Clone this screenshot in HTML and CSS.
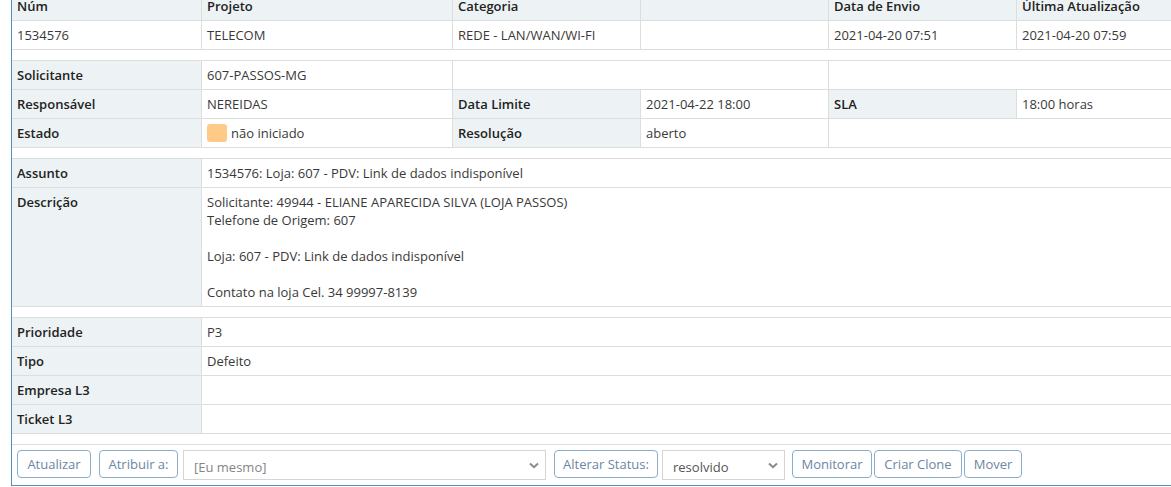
FILE: index.html
```html
<!DOCTYPE html>
<html lang="pt-BR">
<head>
<meta charset="utf-8">
<title>Ticket 1534576</title>
<link rel="stylesheet" href="styles.css">
</head>
<body>
<div class="widget">
  <table class="bug">
    <colgroup>
      <col class="c1"><col class="c2"><col class="c3"><col class="c4"><col class="c5"><col class="c6">
    </colgroup>
    <thead>
      <tr><th>Núm</th><th>Projeto</th><th>Categoria</th><th></th><th>Data de Envio</th><th>Última Atualização</th></tr>
    </thead>
    <tbody>
      <tr><td>1534576</td><td>TELECOM</td><td>REDE - LAN/WAN/WI-FI</td><td></td><td>2021-04-20 07:51</td><td>2021-04-20 07:59</td></tr>
      <tr class="spacer"><td colspan="6"></td></tr>
      <tr><th>Solicitante</th><td>607-PASSOS-MG</td><td colspan="2"></td><td colspan="2"></td></tr>
      <tr><th>Responsável</th><td>NEREIDAS</td><th>Data Limite</th><td>2021-04-22 18:00</td><th>SLA</th><td>18:00 horas</td></tr>
      <tr><th>Estado</th><td><span class="swatch"></span>não iniciado</td><th>Resolução</th><td>aberto</td><td colspan="2"></td></tr>
      <tr class="spacer"><td colspan="6"></td></tr>
      <tr><th>Assunto</th><td colspan="5">1534576: Loja: 607 - PDV: Link de dados indisponível</td></tr>
      <tr><th>Descrição</th><td colspan="5">Solicitante: 49944 - ELIANE APARECIDA SILVA (LOJA PASSOS)<br>Telefone de Origem: 607<br><br>Loja: 607 - PDV: Link de dados indisponível<br><br>Contato na loja Cel. 34 99997-8139</td></tr>
      <tr class="spacer"><td colspan="6"></td></tr>
      <tr><th>Prioridade</th><td colspan="5">P3</td></tr>
      <tr><th>Tipo</th><td colspan="5">Defeito</td></tr>
      <tr><th>Empresa L3</th><td colspan="5"></td></tr>
      <tr><th>Ticket L3</th><td colspan="5"></td></tr>
      <tr class="spacer"><td colspan="6"></td></tr>
    </tbody>
  </table>
  <div class="toolbar">
    <button class="btn b-update">Atualizar</button>
    <button class="btn b-assign">Atribuir a:</button>
    <div class="sel sel-user">
      <select class="select"><option>[Eu mesmo]</option></select>
      <svg class="chev" width="10" height="7" viewBox="0 0 10 7"><path d="M1 1.5 L5 5.2 L9 1.5" fill="none" stroke="#8a8a8a" stroke-width="2"/></svg>
    </div>
    <button class="btn b-status">Alterar Status:</button>
    <div class="sel sel-status">
      <select class="select"><option>resolvido</option></select>
      <svg class="chev" width="10" height="7" viewBox="0 0 10 7"><path d="M1 1.5 L5 5.2 L9 1.5" fill="none" stroke="#8a8a8a" stroke-width="2"/></svg>
    </div>
    <button class="btn b-monitor">Monitorar</button>
    <button class="btn b-clone">Criar Clone</button>
    <button class="btn b-move">Mover</button>
  </div>
</div>
</body>
</html>
```
FILE: styles.css
```css
html, body {
  margin: 0;
  padding: 0;
  background: #fff;
  overflow: hidden;
}

body {
  font-family: "Open Sans", "Liberation Sans", sans-serif;
  font-size: 13px;
  line-height: 18px;
  color: #393939;
}

.widget {
  margin: -8px 0 0 11px;
  width: 1194px;
  border-left: 1px solid #5090c1;
  border-bottom: 1px solid #5090c1;
}

.bug {
  border-collapse: separate;
  border-spacing: 0;
  table-layout: fixed;
  width: 1193px;
}

.c1 { width: 190px; }
.c2 { width: 251px; }
.c3 { width: 188px; }
.c4 { width: 188px; }
.c5 { width: 188px; }
.c6 { width: 188px; }

.bug th,
.bug td {
  box-sizing: border-box;
  padding: 5px 5px;
  text-align: left;
  vertical-align: top;
  border-right: 1px solid #dddddd;
  border-bottom: 1px solid #dddddd;
  height: 29px;
}

.bug th {
  background: #edf3f4;
  color: #222;
  font-weight: 600;
}

.bug td {
  background: #fff;
  font-weight: 400;
}

.bug .spacer td {
  height: 11px;
  padding: 0;
  border-right: none;
}

.swatch {
  display: inline-block;
  width: 20px;
  height: 18px;
  border-radius: 3px;
  background: #ffc987;
  vertical-align: top;
  margin-right: 4px;
}

.toolbar {
  display: flex;
  align-items: flex-start;
  padding: 5px;
  height: 30px;
}

.btn {
  box-sizing: border-box;
  font-family: "Open Sans", "Liberation Sans", sans-serif;
  font-size: 13px;
  line-height: 18px;
  height: 28px;
  padding: 4px 0;
  margin: 0;
  text-align: center;
  background: #fff;
  color: #6a87a3;
  border: 1px solid #8aafce;
  border-radius: 4px;
}

.b-update { width: 74px; margin-right: 8px; }
.b-assign { width: 79px; margin-right: 5px; }
.b-status { width: 104px; margin-right: 4px; }
.b-monitor { width: 80px; margin-right: 2px; }
.b-clone { width: 88px; margin-right: 2px; }
.b-move { width: 58px; }

.sel {
  position: relative;
  height: 30px;
}

.sel-user { width: 363px; margin-right: 8px; }
.sel-status { width: 123px; margin-right: 7px; }

.select {
  -webkit-appearance: none;
  appearance: none;
  box-sizing: border-box;
  width: 100%;
  height: 30px;
  margin: 0;
  padding: 3px 10px 0 10px;
  font-family: "Open Sans", "Liberation Sans", sans-serif;
  font-size: 13px;
  color: #858585;
  background: #fff;
  border: 1px solid #d5d5d5;
  border-radius: 0;
}

.sel-status .select { color: #555; }

.chev {
  position: absolute;
  right: 7px;
  top: 12px;
}
```
